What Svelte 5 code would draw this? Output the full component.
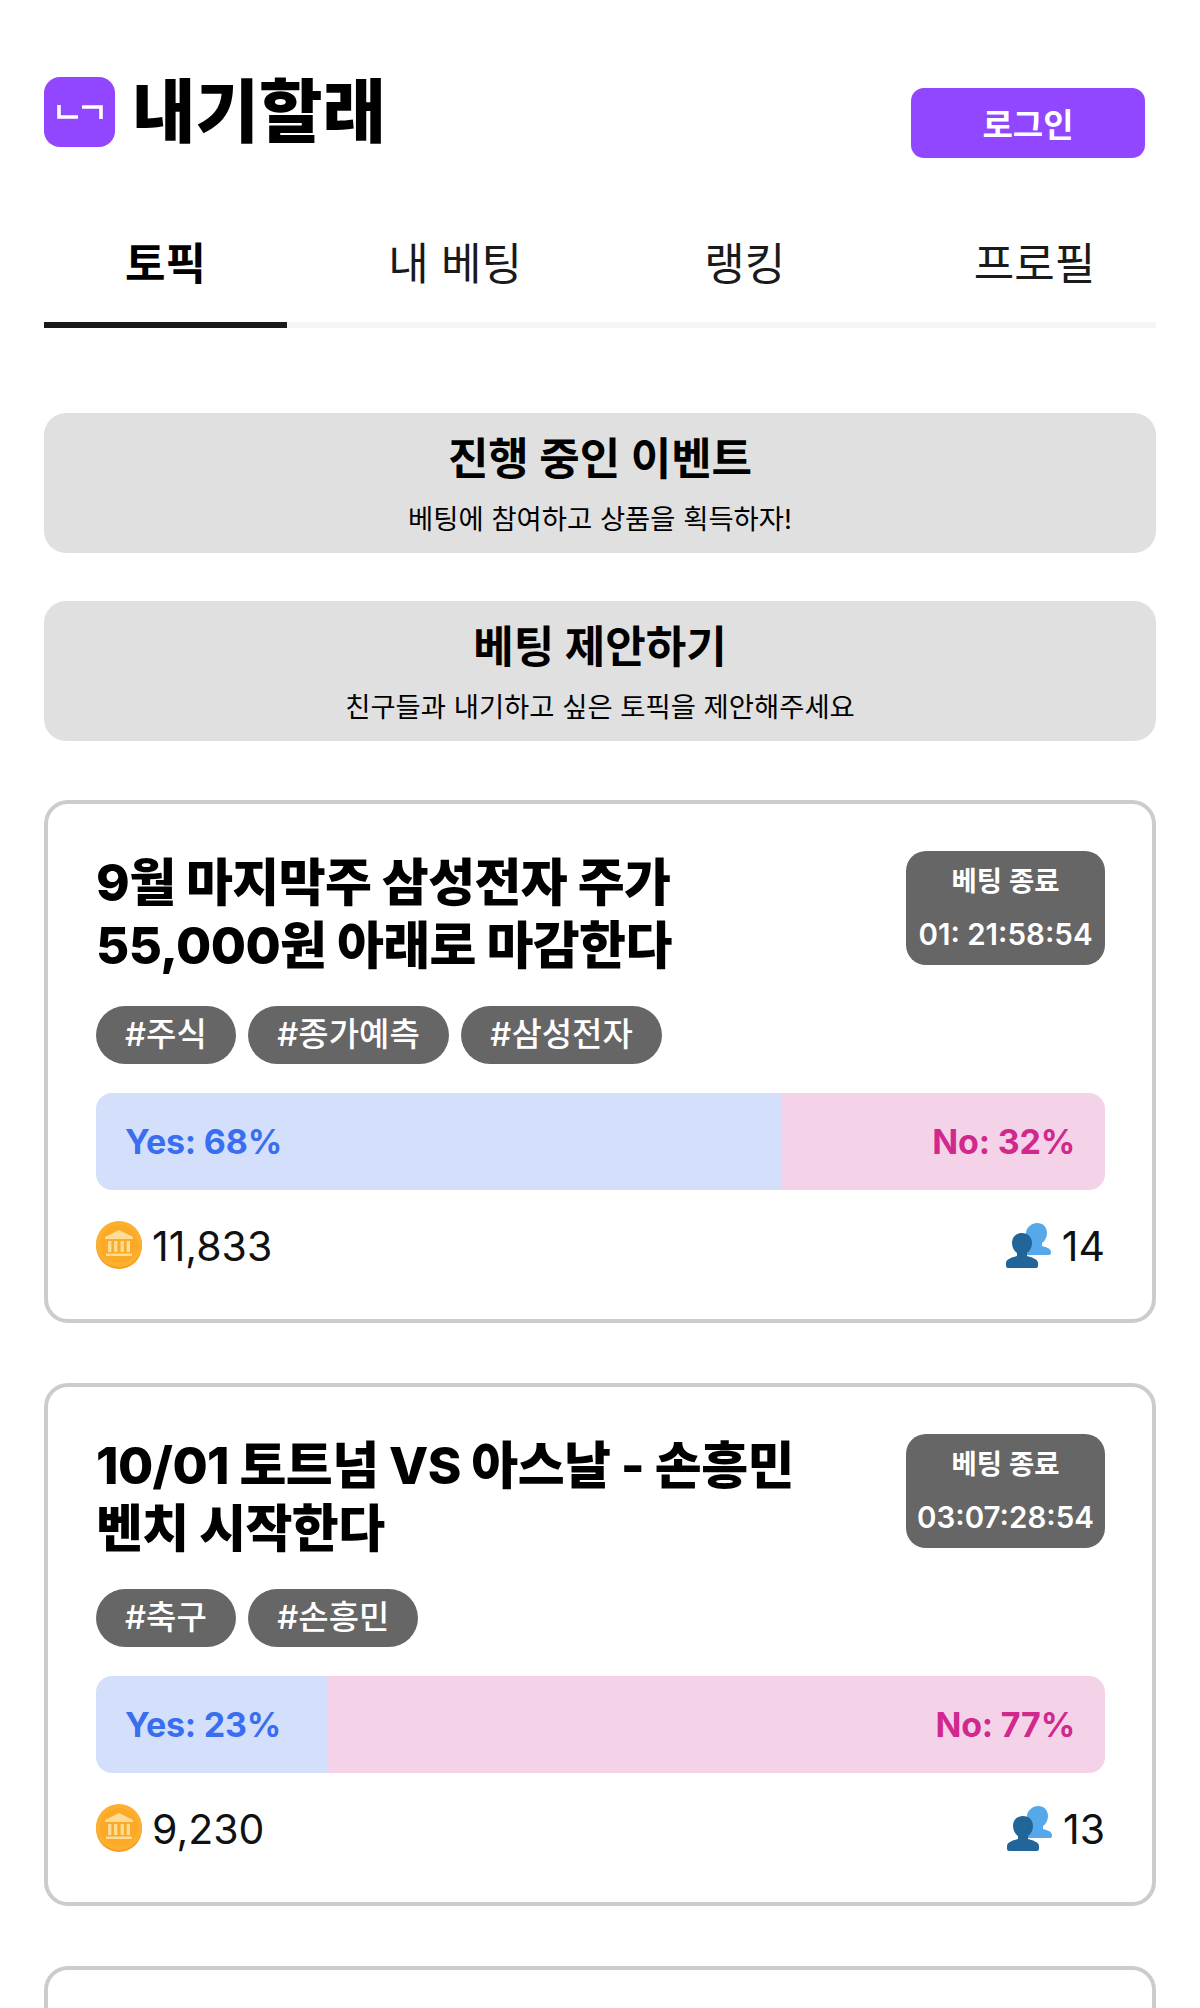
<script>
  const tabs = ["토픽", "내 베팅", "랭킹", "프로필"];

  const banners = [
    { title: "진행 중인 이벤트", sub: "베팅에 참여하고 상품을 획득하자!" },
    { title: "베팅 제안하기", sub: "친구들과 내기하고 싶은 토픽을 제안해주세요" }
  ];

  const topics = [
    {
      title: ["9월 마지막주 삼성전자 주가", "55,000원 아래로 마감한다"],
      time: "01: 21:58:54",
      tags: ["주식", "종가예측", "삼성전자"],
      yes: 68,
      coins: "11,833",
      people: 14
    },
    {
      title: ["10/01 토트넘 VS 아스날 - 손흥민", "벤치 시작한다"],
      time: "03:07:28:54",
      tags: ["축구", "손흥민"],
      yes: 23,
      coins: "9,230",
      people: 13
    }
  ];
</script>

<div class="page">
  <header class="header">
    <div class="brand">
      <div class="logo">
        <svg width="46" height="16" viewBox="0 0 46 16" fill="none" stroke="#fff" stroke-width="3.6">
          <path d="M2 1v12h19" />
          <path d="M25 3h19v12" />
        </svg>
      </div>
      <h1>내기할래</h1>
    </div>
    <button class="login">로그인</button>
  </header>

  <nav class="tabs">
    {#each tabs as tab, i}
      <div class="tab" class:active={i === 0}>{tab}</div>
    {/each}
  </nav>

  <section class="banners">
    {#each banners as banner}
      <div class="banner">
        <div class="banner__title">{banner.title}</div>
        <div class="banner__sub">{banner.sub}</div>
      </div>
    {/each}
  </section>

  <section class="cards">
    {#each topics as topic}
      <article class="card">
        <div class="card__top">
          <h2>{topic.title[0]}<br />{topic.title[1]}</h2>
          <div class="timer">
            <div class="timer__label">베팅 종료</div>
            <div class="timer__time">{topic.time}</div>
          </div>
        </div>
        <div class="tags">
          {#each topic.tags as tag}
            <span class="tag">#{tag}</span>
          {/each}
        </div>
        <div class="bar">
          <div class="bar__yes" style="width: {topic.yes}%">Yes: {topic.yes}%</div>
          <div class="bar__no">No: {100 - topic.yes}%</div>
        </div>
        <div class="card__foot">
          <div class="stat">
            <svg class="coin" width="46" height="48" viewBox="0 0 46 48">
              <circle cx="23" cy="25" r="23" fill="#f59f1c" />
              <circle cx="23" cy="23" r="23" fill="#fdb02f" />
              <circle cx="23" cy="23" r="19" fill="#fba926" />
              <g fill="#fedc94">
                <path d="M23 9l14 7v2H9v-2z" />
                <rect x="12" y="20" width="3.4" height="11" />
                <rect x="18" y="20" width="3.4" height="11" />
                <rect x="24.6" y="20" width="3.4" height="11" />
                <rect x="30.6" y="20" width="3.4" height="11" />
                <rect x="10" y="32.5" width="26" height="2.5" />
              </g>
            </svg>
            <span>{topic.coins}</span>
          </div>
          <div class="stat">
            <svg width="46" height="46" viewBox="0 0 46 46">
              <path fill="#55a9ea" d="M31 1c6 0 10 4 10 10 0 4-2 8-5 10v3c3 1 9 2 9 6v1c0 1-1 2-2 2H20V10c1-5 6-9 11-9z" />
              <path fill="#226699" d="M16 11c6 0 10 4 10 10 0 4-2 8-5 10v3c4 1 11 3 11 7v3c0 1-1 2-2 2H2c-1 0-2-1-2-2v-3c0-4 7-6 11-7v-3c-3-2-5-6-5-10 0-6 4-10 10-10z" />
            </svg>
            <span>{topic.people}</span>
          </div>
        </div>
      </article>
    {/each}
    <article class="card card--empty"></article>
  </section>
</div>

<style>
  :global(body) {
    background: #fff;
  }

  .page {
    height: 2008px;
    overflow: hidden;
    box-sizing: border-box;
    padding: 77px 44px 0;
    color: #000;
    font-family: Inter, "Noto Sans CJK KR", sans-serif;
  }

  .header {
    display: flex;
    justify-content: space-between;
    align-items: flex-start;
    height: 81px;
    padding-right: 11px;
  }

  .brand {
    display: flex;
    align-items: flex-start;
    gap: 17px;
  }

  .logo {
    width: 71px;
    height: 70px;
    border-radius: 16px;
    background: #9146ff;
    display: flex;
    align-items: center;
    justify-content: center;
  }

  h1 {
    margin: 0;
    font-size: 69px;
    line-height: 71px;
    font-weight: 900;
  }

  .login {
    margin-top: 11px;
    width: 234px;
    height: 70px;
    border: 0;
    border-radius: 13px;
    background: #9146ff;
    color: #fff;
    font-family: inherit;
    font-size: 33px;
    font-weight: 600;
  }

  .tabs {
    display: flex;
    justify-content: space-between;
    border-bottom: 6px solid #f5f5f5;
    height: 170px;
    box-sizing: border-box;
  }

  .tab {
    width: 243px;
    margin-bottom: -6px;
    padding-top: 76px;
    box-sizing: border-box;
    text-align: center;
    font-size: 44px;
    line-height: 60px;
    color: #1a1a1a;
  }

  .tab.active {
    font-weight: 700;
    color: #000;
    border-bottom: 6px solid #1a1a1a;
  }

  .banners {
    margin-top: 85px;
    display: flex;
    flex-direction: column;
    gap: 48px;
  }

  .banner {
    height: 140px;
    box-sizing: border-box;
    padding-top: 17px;
    border-radius: 22px;
    background: #e0e0e0;
    text-align: center;
  }

  .banner__title {
    font-size: 44px;
    line-height: 58px;
    font-weight: 700;
  }

  .banner__sub {
    margin-top: 11px;
    font-size: 27.4px;
    line-height: 40px;
  }

  .cards {
    margin-top: 59px;
    display: flex;
    flex-direction: column;
    gap: 60px;
  }

  .card {
    box-sizing: border-box;
    height: 523px;
    padding: 47px 47px 0 48px;
    border: 4px solid #ccc;
    border-radius: 24px;
    background: #fff;
    flex-shrink: 0;
  }

  .card__top {
    display: flex;
    justify-content: space-between;
    align-items: flex-start;
    height: 155px;
  }

  h2 {
    margin: 0;
    font-size: 51px;
    line-height: 63px;
    font-weight: 800;
    letter-spacing: -0.6px;
  }

  .timer {
    width: 199px;
    height: 114px;
    border-radius: 20px;
    background: #666;
    color: #fff;
    text-align: center;
    font-weight: 600;
  }

  .timer__label {
    margin-top: 10px;
    font-size: 27.5px;
    line-height: 40px;
  }

  .timer__time {
    margin-top: 13px;
    font-size: 29.5px;
    line-height: 40px;
  }

  .tags {
    display: flex;
    gap: 12.5px;
  }

  .tag {
    height: 58px;
    padding: 0 29px;
    border-radius: 29px;
    background: #666;
    color: #fff;
    font-size: 33px;
    line-height: 57px;
    font-weight: 500;
  }

  .bar {
    margin-top: 29px;
    height: 97px;
    display: flex;
    border-radius: 16px;
    overflow: hidden;
    font-size: 34px;
    line-height: 97px;
    font-weight: 700;
    letter-spacing: -0.2px;
  }

  .bar__yes {
    box-sizing: border-box;
    padding-left: 29px;
    background: #d4e0fb;
    color: #3a6ef0;
  }

  .bar__no {
    flex: 1;
    padding-right: 30px;
    text-align: right;
    background: #f4d3e9;
    color: #d1288e;
  }

  .card__foot {
    margin-top: 27px;
    display: flex;
    justify-content: space-between;
    align-items: center;
  }

  .stat {
    display: flex;
    align-items: center;
    gap: 10px;
    font-size: 41px;
    line-height: 52px;
    color: #111;
  }

  .stat span {
    margin-top: 3px;
  }
</style>
